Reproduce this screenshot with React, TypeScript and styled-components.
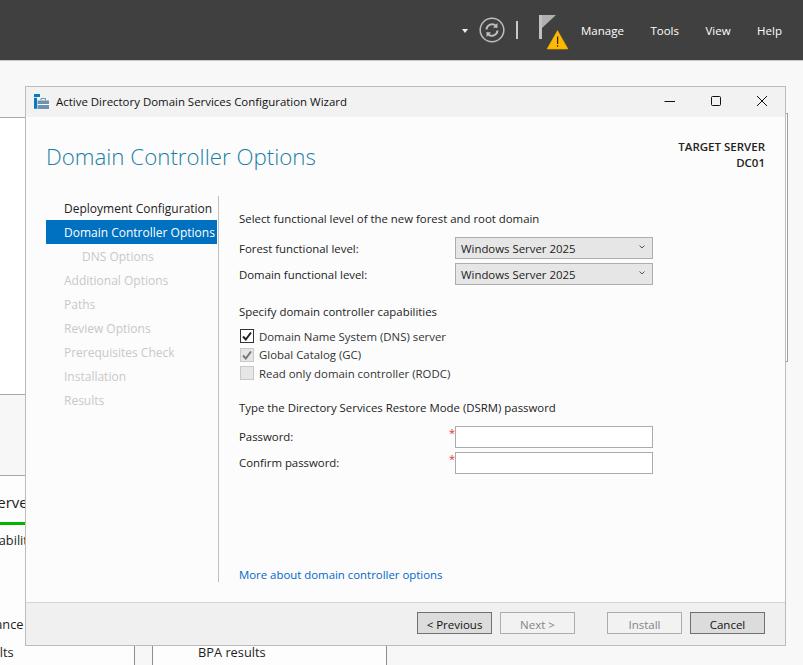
import React from "react";
import styled, { createGlobalStyle } from "styled-components";

const Global = createGlobalStyle`
  html, body { margin: 0; padding: 0; width: 803px; height: 665px; overflow: hidden; background: #f8f8f8; }
  * { box-sizing: border-box; }
  body { font-family: "Open Sans", "Noto Sans", sans-serif; font-size: 11.5px; color: #1e1e1e; }
`;

const Desktop = styled.div`
  position: relative; width: 803px; height: 665px; overflow: hidden;
  display: flex; flex-direction: column; background: #f8f8f8;
`;
const TopBar = styled.header`
  flex: none; height: 61px; background: #404040; border-bottom: 1px solid #c8c8c8;
  display: flex; align-items: center; justify-content: flex-end; padding-right: 21px;
`;
const Caret = styled.span`
  width: 0; height: 0; border-left: 3.5px solid transparent; border-right: 3.5px solid transparent;
  border-top: 4px solid #f0f0f0; margin-right: 11px; margin-top: 1px;
`;
const Divider = styled.span`
  width: 2px; height: 18px; background: #c8c8c8; margin: 0 21px 0 11px;
`;
const FlagBox = styled.span`
  width: 30px; height: 36px; margin-right: 12px; margin-top: 6px; display: block;
`;
const Menu = styled.nav`display: flex; gap: 26.5px;`;
const MenuItem = styled.span`color: #fff; font-size: 11.5px;`;

const Workspace = styled.div`flex: 1; display: flex; min-height: 0; padding-top: 52px;`;
const LeftColumn = styled.div`width: 400px; flex: none; padding-top: 4px;`;
const WhitePanel = styled.div`height: 278px; background: #fff; border-top: 1px solid #a8a8a8; border-bottom: 1px solid #a8a8a8;`;
const TintPanel = styled.div`height: 81px; background: #f7f7f7; border-bottom: 1px solid #a8a8a8;`;
const TilesRow = styled.div`
  margin-left: -100px; display: flex; gap: 17px; background: #f7f7f7;
`;
const Tile = styled.div`
  width: 235px; height: 200px; background: #fdfdfd; flex: none;
  border-right: 1px solid #8e8e8e; border-left: 1px solid #8e8e8e;
`;
const TileTitle = styled.div`
  height: 49px; padding: 16px 0 0 48px; font-size: 15px; border-bottom: 3px solid #00b400; white-space: nowrap;
`;
const TileRow = styled.div<{ $indent?: boolean }>`
  height: 28px; padding: 7px 0 0 ${p => (p.$indent ? 50 : 45)}px; font-size: 12.8px; white-space: nowrap; line-height: 17px;
`;
const RightPanel = styled.div`
  flex: 1; height: 249px; margin-right: 15px;
  background: #fff; border: 1px solid #a0a0a0; border-left: none;
`;

const Window = styled.section`
  position: absolute; left: 25px; top: 86px; width: 761px; height: 560px;
  border: 1px solid #bcbcbc; background: #fcfcfc;
  display: flex; flex-direction: column;
`;
const TitleBar = styled.div`
  flex: none; height: 30px; background: #f2f2f2; display: flex; align-items: center; padding: 0 0 2px 8px;
`;
const WinTitle = styled.span`margin-left: 7px; font-size: 11.45px; color: #111;`;
const Controls = styled.div`margin-left: auto; display: flex;`;
const Ctl = styled.span`width: 46px; height: 28px; display: flex; align-items: center; justify-content: center;`;

const Head = styled.div`
  flex: none; height: 79px; display: flex; justify-content: space-between; padding: 23px 20px 0 20px;
`;
const H1 = styled.h1`
  margin: 0; font-size: 22.3px; font-weight: 300; color: #1a7fa6; line-height: 33px; white-space: nowrap;
`;
const Target = styled.div`
  text-align: right; font-weight: 600; font-size: 11.5px; line-height: 16px; color: #222; margin-top: -1px;
`;
const Main = styled.div`flex: 1; min-height: 0; display: flex; padding: 0 0 20px 20px;`;
const Side = styled.div`width: 172px; flex: none; font-size: 12px;`;
const Step = styled.div<{ $state?: "done" | "active" | "todo"; $sub?: boolean }>`
  height: 24px; line-height: 26px; white-space: nowrap; overflow: hidden; padding: 0 0 0 ${p => (p.$sub ? 36 : 18)}px;
  background: ${p => (p.$state === "active" ? "#0070c0" : "transparent")};
  margin-right: 1px;
  color: ${p => (p.$state === "active" ? "#fff" : p.$state === "done" ? "#222" : "#c8c8c8")};
`;
const Content = styled.div`
  flex: 1; border-left: 1px solid #c0c0c0; padding: 15px 0 0 20px; display: flex; flex-direction: column; font-size: 11.4px;
`;
const Para = styled.div<{ $mt: number; $mb: number }>`
  line-height: 16px; margin-top: ${p => p.$mt}px; margin-bottom: ${p => p.$mb}px; color: #222;
`;
const Row = styled.div`display: flex; align-items: center; height: 22px; margin-bottom: 4px;`;
const RowLabel = styled.span`width: 216px; flex: none; color: #222; position: relative;`;
const Star = styled.span`
  position: absolute; right: 0; top: -3px; color: #f03030; font-size: 11px; line-height: 14px;
`;
const Select = styled.div`
  width: 198px; height: 22px; background: #e6e6e6; border: 1px solid #adadad;
  display: flex; align-items: center; justify-content: space-between; padding: 0 6px 0 5px; color: #222;
`;
const ChevronMark = styled.svg`width: 8px; height: 6px; margin-bottom: 3px;`;
const Input = styled.div`width: 198px; height: 22px; background: #fff; border: 1px solid #ababab;`;
const CheckRow = styled.div`
  height: 18.5px; display: flex; align-items: center; gap: 5px; padding-left: 1px; color: #333;
`;
const Box = styled.span<{ $off?: boolean }>`
  width: 14px; height: 14px; flex: none; display: flex; align-items: center; justify-content: center;
  border: 1px solid ${p => (p.$off ? "#c8c8c8" : "#333")};
  background: ${p => (p.$off ? "#e6e6e6" : "#fff")};
`;
const Link = styled.span`margin-top: auto; color: #0066cc; line-height: 16px; margin-bottom: -1px;`;
const Footer = styled.div`
  flex: none; height: 43px; background: #f0f0f0; border-top: 1px solid #d4d4d4;
  display: flex; align-items: center; justify-content: flex-end; padding: 0 20px 2px 0;
`;
const Btn = styled.button<{ $ml: number }>`
  width: 75px; height: 22px; margin-left: ${p => p.$ml}px; font: inherit; padding: 2px 0 0;
  background: ${p => (p.disabled ? "#f2f2f2" : "#dcdcdc")};
  border: 1px solid ${p => (p.disabled ? "#adadad" : "#707070")};
  color: ${p => (p.disabled ? "#838383" : "#111")};
`;

const Chevron = () => (
  <ChevronMark viewBox="0 0 8 6"><path d="M1.5 1.5 L4 4 L6.5 1.5" fill="none" stroke="#555" strokeWidth="1" /></ChevronMark>
);
const Tick = ({ c }: { c: string }) => (
  <svg width="12" height="12" viewBox="0 0 12 12"><path d="M2 6.5 L4.8 9.5 L10 2.5" fill="none" stroke={c} strokeWidth="2" /></svg>
);

const Refresh = () => (
  <svg width="26" height="26" viewBox="0 0 26 26">
    <circle cx="13" cy="13" r="11.8" fill="none" stroke="#bdbdbd" strokeWidth="1.5" />
    <path d="M7.5 12.5 A5.6 5.6 0 0 1 17 8.8" fill="none" stroke="#bdbdbd" strokeWidth="2" />
    <path d="M18.5 6 L18.5 11 L14 10.5 Z" fill="#bdbdbd" />
    <path d="M18.5 13.5 A5.6 5.6 0 0 1 9 17.2" fill="none" stroke="#bdbdbd" strokeWidth="2" />
    <path d="M7.5 20 L7.5 15 L12 15.5 Z" fill="#bdbdbd" />
  </svg>
);
const Flag = () => (
  <svg width="30" height="36" viewBox="0 0 30 36">
    <rect x="0" y="0" width="3" height="24" fill="#c0c0c0" />
    <path d="M3 0 H17 L3 13 Z" fill="#b0b0b0" />
    <path d="M18.5 15.5 L29 34 H8 Z" fill="#ffb900" stroke="#e6a800" strokeWidth="0.6" />
    <rect x="18" y="21.5" width="1.2" height="7.5" fill="#222" />
    <rect x="18" y="30.2" width="1.2" height="1.5" fill="#222" />
  </svg>
);
const AppIcon = () => (
  <svg width="15" height="15" viewBox="0 0 15 15">
    <rect x="0" y="0" width="6" height="3" fill="#0a78c8" />
    <rect x="0" y="3.8" width="3" height="11" fill="#0a78c8" />
    <rect x="3.5" y="6.5" width="11.5" height="8.5" fill="#6d93ad" />
    <rect x="3.5" y="10" width="11.5" height="1" fill="#ffffff" />
    <path d="M7 6.5 V4.5 H11.5 V6.5" fill="none" stroke="#6d93ad" strokeWidth="1" />
  </svg>
);

const steps = [
  { t: "Deployment Configuration", s: "done" as const },
  { t: "Domain Controller Options", s: "active" as const },
  { t: "DNS Options", s: "todo" as const, sub: true },
  { t: "Additional Options", s: "todo" as const },
  { t: "Paths", s: "todo" as const },
  { t: "Review Options", s: "todo" as const },
  { t: "Prerequisites Check", s: "todo" as const },
  { t: "Installation", s: "todo" as const },
  { t: "Results", s: "todo" as const },
];
const tileRows = ["Manageability", "Events", "Services", "Performance", "BPA results"];

export default function App() {
  return (
    <Desktop>
      <Global />
      <TopBar>
        <Caret />
        <Refresh />
        <Divider />
        <FlagBox><Flag /></FlagBox>
        <Menu>
          <MenuItem>Manage</MenuItem>
          <MenuItem>Tools</MenuItem>
          <MenuItem>View</MenuItem>
          <MenuItem>Help</MenuItem>
        </Menu>
      </TopBar>
      <Workspace>
        <LeftColumn>
          <WhitePanel />
          <TintPanel />
          <TilesRow>
            {["Local Server", "All Servers"].map(n => (
              <Tile key={n}>
                <TileTitle>{n}</TileTitle>
                {tileRows.map((r, i) => <TileRow key={r} $indent={i === 0}>{r}</TileRow>)}
              </Tile>
            ))}
          </TilesRow>
        </LeftColumn>
        <RightPanel />
      </Workspace>
      <Window>
        <TitleBar>
          <AppIcon />
          <WinTitle>Active Directory Domain Services Configuration Wizard</WinTitle>
          <Controls>
            <Ctl><svg width="12" height="12" viewBox="0 0 12 12"><path d="M0.5 6.5 H11" stroke="#111" /></svg></Ctl>
            <Ctl><svg width="12" height="12" viewBox="0 0 12 12"><rect x="1.5" y="1.5" width="9" height="9" rx="1" fill="none" stroke="#111" /></svg></Ctl>
            <Ctl><svg width="12" height="12" viewBox="0 0 12 12"><path d="M1 1 L11 11 M11 1 L1 11" stroke="#111" /></svg></Ctl>
          </Controls>
        </TitleBar>
        <Head>
          <H1>Domain Controller Options</H1>
          <Target>TARGET SERVER<br />DC01</Target>
        </Head>
        <Main>
          <Side>
            {steps.map(s => <Step key={s.t} $state={s.s} $sub={s.sub}>{s.t}</Step>)}
          </Side>
          <Content>
            <Para $mt={0} $mb={10}>Select functional level of the new forest and root domain</Para>
            <Row><RowLabel>Forest functional level:</RowLabel><Select>Windows Server 2025<Chevron /></Select></Row>
            <Row><RowLabel>Domain functional level:</RowLabel><Select>Windows Server 2025<Chevron /></Select></Row>
            <Para $mt={15} $mb={7}>Specify domain controller capabilities</Para>
            <CheckRow><Box><Tick c="#222" /></Box>Domain Name System (DNS) server</CheckRow>
            <CheckRow><Box $off><Tick c="#777" /></Box>Global Catalog (GC)</CheckRow>
            <CheckRow><Box $off />Read only domain controller (RODC)</CheckRow>
            <Para $mt={17} $mb={10}>Type the Directory Services Restore Mode (DSRM) password</Para>
            <Row><RowLabel>Password:<Star>*</Star></RowLabel><Input /></Row>
            <Row><RowLabel>Confirm password:<Star>*</Star></RowLabel><Input /></Row>
            <Link>More about domain controller options</Link>
          </Content>
        </Main>
        <Footer>
          <Btn $ml={0}>&lt; Previous</Btn>
          <Btn $ml={8} disabled>Next &gt;</Btn>
          <Btn $ml={32} disabled>Install</Btn>
          <Btn $ml={8}>Cancel</Btn>
        </Footer>
      </Window>
    </Desktop>
  );
}
